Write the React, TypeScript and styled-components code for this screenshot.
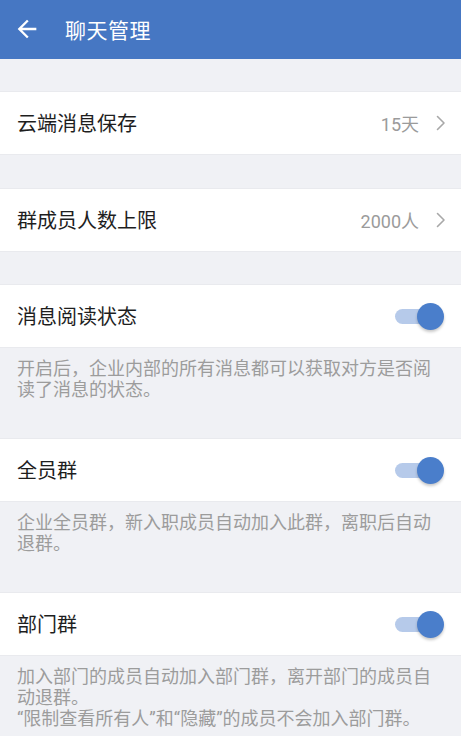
import React from "react";
import styled, { createGlobalStyle } from "styled-components";

const GlobalStyle = createGlobalStyle`
  html, body {
    margin: 0;
    padding: 0;
    background: #f0f1f5;
  }
  body {
    font-family: Roboto, "Noto Sans CJK SC", sans-serif;
    -webkit-font-smoothing: antialiased;
  }
`;

const Page = styled.div`
  width: 461px;
  min-height: 736px;
  background: #f0f1f5;
  display: flex;
  flex-direction: column;
`;

const Header = styled.header`
  height: 59px;
  background: #4677c3;
  display: flex;
  align-items: center;
  padding-left: 13px;
  box-sizing: border-box;
  flex-shrink: 0;
`;

const BackButton = styled.button`
  width: 28px;
  height: 28px;
  padding: 0;
  border: none;
  background: transparent;
  display: flex;
  align-items: center;
  justify-content: center;
  margin-right: 24px;
  margin-top: -1px;
`;

const Title = styled.h1`
  margin: 0;
  font-size: 21px;
  font-weight: 400;
  color: #ffffff;
  letter-spacing: 0.5px;
  margin-top: -2px;
`;

const Row = styled.div<{ $gap?: number }>`
  height: 64px;
  margin-top: ${(p) => p.$gap ?? 0}px;
  background: #ffffff;
  display: flex;
  align-items: center;
  padding: 0 15px 0 17px;
  box-sizing: border-box;
  border-top: 1px solid #e9eaee;
  border-bottom: 1px solid #e9eaee;
`;

const RowLabel = styled.span`
  flex: 1;
  font-size: 20px;
  color: #1e1e1e;
  margin-top: -1px;
`;

const RowValue = styled.span`
  font-size: 18px;
  color: #9b9b9b;
  margin-right: 17px;
`;

const Description = styled.p`
  margin: 0;
  padding: 10px 17px 38px 17px;
  font-size: 18px;
  line-height: 21px;
  color: #9c9c9c;
  box-sizing: border-box;
`;

const SwitchTrack = styled.div<{ $on: boolean }>`
  position: relative;
  width: 46px;
  height: 15px;
  border-radius: 8px;
  background: ${(p) => (p.$on ? "#b6caea" : "#c8c8c8")};
  margin-right: 5px;
`;

const SwitchKnob = styled.div<{ $on: boolean }>`
  position: absolute;
  top: 50%;
  left: ${(p) => (p.$on ? "22px" : "-4px")};
  width: 27px;
  height: 27px;
  margin-top: -13.5px;
  border-radius: 50%;
  background: ${(p) => (p.$on ? "#4a7ecb" : "#fafafa")};
  box-shadow: 0 2px 3px rgba(0, 0, 0, 0.22);
`;

const Chevron = () => (
  <svg width="10" height="16" viewBox="0 0 10 16">
    <polyline
      points="1.5,1.5 8,8 1.5,14.5"
      fill="none"
      stroke="#a8a8a8"
      strokeWidth="1.6"
      strokeLinecap="round"
      strokeLinejoin="round"
    />
  </svg>
);

const BackArrow = () => (
  <svg width="28" height="28" viewBox="0 0 24 24">
    <path
      fill="#ffffff"
      d="M20 11H7.83l5.59-5.59L12 4l-8 8 8 8 1.41-1.41L7.83 13H20v-2z"
    />
  </svg>
);

const Switch = ({ on }: { on: boolean }) => (
  <SwitchTrack $on={on}>
    <SwitchKnob $on={on} />
  </SwitchTrack>
);

export default function App() {
  return (
    <>
      <GlobalStyle />
      <Page>
        <Header>
          <BackButton aria-label="back">
            <BackArrow />
          </BackButton>
          <Title>聊天管理</Title>
        </Header>

        <Row $gap={32}>
          <RowLabel>云端消息保存</RowLabel>
          <RowValue>15天</RowValue>
          <Chevron />
        </Row>

        <Row $gap={33}>
          <RowLabel>群成员人数上限</RowLabel>
          <RowValue>2000人</RowValue>
          <Chevron />
        </Row>

        <Row $gap={32}>
          <RowLabel>消息阅读状态</RowLabel>
          <Switch on />
        </Row>
        <Description>
          开启后，企业内部的所有消息都可以获取对方是否阅读了消息的状态。
        </Description>

        <Row>
          <RowLabel>全员群</RowLabel>
          <Switch on />
        </Row>
        <Description>
          企业全员群，新入职成员自动加入此群，离职后自动退群。
        </Description>

        <Row>
          <RowLabel>部门群</RowLabel>
          <Switch on />
        </Row>
        <Description>
          加入部门的成员自动加入部门群，离开部门的成员自动退群。
          <br />
          “限制查看所有人”和“隐藏”的成员不会加入部门群。
        </Description>
      </Page>
    </>
  );
}
